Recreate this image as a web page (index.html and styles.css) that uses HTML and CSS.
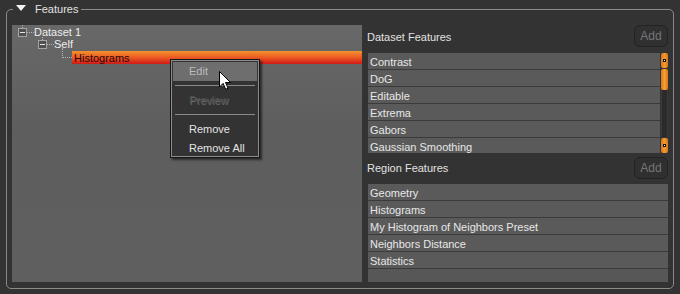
FILE: index.html
```html
<!DOCTYPE html>
<html lang="en">
<head>
<meta charset="UTF-8" />
<title>Features</title>
<link rel="stylesheet" href="styles.css">
</head>
<body>
  <div class="group">
    <div class="group-title">
      <svg class="caret" viewBox="0 0 10 6" aria-hidden="true"><path d="M0 0h10L5 6z" fill="#f2f2f2"/></svg>
      <span>Features</span>
    </div>

    <div class="content">
      <!-- Tree of features per dataset -->
      <div class="tree">
        <div class="node lvl0">
          <span class="toggle"></span><span class="dots"></span><span class="label">Dataset 1</span>
        </div>
        <div class="node lvl1">
          <span class="toggle"></span><span class="dots"></span><span class="label">Self</span>
        </div>
        <div class="node lvl2">
          <span class="elbow"></span><span class="label selected">Histograms</span>
        </div>
      </div>

      <div class="side">
        <div class="side-head">
          <span class="side-label">Dataset Features</span>
          <button class="add" disabled>Add</button>
        </div>
        <div class="list-wrap">
          <ul class="list">
            <li>Contrast</li>
            <li>DoG</li>
            <li>Editable</li>
            <li>Extrema</li>
            <li>Gabors</li>
            <li>Gaussian Smoothing</li>
          </ul>
          <div class="scrollbar">
            <span class="sb-btn"><i></i></span>
            <span class="sb-track"><span class="sb-thumb"></span></span>
            <span class="sb-btn"><i></i></span>
          </div>
        </div>

        <div class="side-head region-head">
          <span class="side-label">Region Features</span>
          <button class="add" disabled>Add</button>
        </div>
        <ul class="list region-list">
          <li>Geometry</li>
          <li>Histograms</li>
          <li>My Histogram of Neighbors Preset</li>
          <li>Neighbors Distance</li>
          <li>Statistics</li>
        </ul>
      </div>
    </div>
  </div>

  <!-- Context menu over the tree -->
  <div class="menu">
    <div class="menu-item active">Edit</div>
    <div class="menu-sep"></div>
    <div class="menu-item disabled">Preview</div>
    <div class="menu-sep"></div>
    <div class="menu-item">Remove</div>
    <div class="menu-item">Remove All</div>
  </div>

  <svg class="cursor" viewBox="0 0 12 19" aria-hidden="true">
    <path d="M0.5 0.5v15.5l3.6-3.6 2.6 5.9 2.4-1-2.6-5.8h5z" fill="#fff" stroke="#000" stroke-width="1"/>
  </svg>
</body>
</html>
```

FILE: styles.css
```css
* {
  margin: 0;
  padding: 0;
  box-sizing: border-box;
}

body {
  width: 680px;
  height: 294px;
  overflow: hidden;
  background: #333;
  font-family: "Liberation Sans", Arial, sans-serif;
  font-size: 11px;
  color: #e4e4e4;
  position: relative;
}

/* Group box with title on the frame */
.group {
  position: relative;
  margin: 9px 0 0 6px;
  width: 668px;
  height: 280px;
  border: 1px solid #8a8a8a;
  border-radius: 5px;
  padding: 15px 5px 6px 5px;
}

.group-title {
  position: absolute;
  top: -8px;
  left: 6px;
  height: 14px;
  padding: 0 3px;
  background: #333;
  display: flex;
  align-items: center;
  gap: 9px;
  color: #e2e2e2;
}

.caret {
  width: 10px;
  height: 6px;
  margin-top: -3px;
}

.content {
  display: flex;
  gap: 6px;
  height: 257px;
}

/* Tree panel */
.tree {
  width: 350px;
  height: 257px;
  padding-top: 1px;
  background: linear-gradient(#686868, #5e5e5e 40%, #5f5f5f);
}

.node {
  display: flex;
  align-items: center;
  height: 12px;
}

.lvl0 { padding-left: 6px; }
.lvl1 { padding-left: 26px; }
.lvl2 {
  padding-left: 50px;
  height: 13px;
  margin-top: 1px;
  align-items: flex-start;
}

.toggle {
  position: relative;
  width: 9px;
  height: 9px;
  border: 1px solid #a4a4a4;
  background: #505050;
  flex-shrink: 0;
}

.toggle::after {
  content: "";
  position: absolute;
  left: 1px;
  top: 3px;
  width: 5px;
  height: 1px;
  background: #e6e6e6;
}

.toggle::before {
  content: "";
  position: absolute;
  left: 3px;
  top: -4px;
  height: 3px;
  border-left: 1px dotted #b4b4b4;
}

.dots {
  width: 7px;
  border-top: 1px dotted #b4b4b4;
}

.label {
  line-height: 13px;
  color: #eee;
}

.elbow {
  width: 10px;
  height: 10px;
  margin-top: -3px;
  border-left: 1px dotted #b4b4b4;
  border-bottom: 1px dotted #b4b4b4;
}

.label.selected {
  flex: 1;
  height: 13px;
  line-height: 14px;
  padding-left: 2px;
  color: #2a0404;
  background: linear-gradient(#f4922e, #ea5a22 50%, #cf1a18);
}

/* Right column */
.side {
  width: 300px;
  display: flex;
  flex-direction: column;
}

.side-head {
  height: 22px;
  display: flex;
  align-items: center;
  justify-content: space-between;
  margin-bottom: 6px;
}

.side-label {
  margin-left: -1px;
  padding-top: 1px;
  color: #e2e2e2;
}

.add {
  width: 34px;
  height: 22px;
  border: 1px solid #232323;
  border-radius: 6px;
  background: #303030;
  color: #767676;
  font-family: "Liberation Sans", Arial, sans-serif;
  font-size: 12px;
}

.region-head {
  height: 21px;
  margin-top: 4px;
}

.list-wrap {
  display: flex;
  gap: 1px;
  height: 100px;
}

.list {
  list-style: none;
  flex: 1;
  height: 100%;
  overflow: hidden;
  background: #575757;
}

.list li {
  height: 17px;
  line-height: 16px;
  padding: 1px 0 0 2px;
  background: #5a5a5a;
  border-bottom: 1px solid #3b3b3b;
  color: #e8e8e8;
  white-space: nowrap;
}

.region-list {
  flex: none;
  height: 98px;
}

/* Orange scrollbar */
.scrollbar {
  width: 7px;
  display: flex;
  flex-direction: column;
}

.sb-btn {
  height: 15px;
  border-radius: 2px;
  background: linear-gradient(90deg, #d8761a, #f59a2e 50%, #d8761a);
  display: flex;
  align-items: center;
  justify-content: center;
}

.sb-btn i {
  width: 3px;
  height: 3px;
  background: #111;
  position: relative;
}

.sb-btn i::after {
  content: "";
  position: absolute;
  left: 1px;
  top: 1px;
  width: 1px;
  height: 1px;
  background: #fff;
}

.sb-track {
  flex: 1;
  background: #2b2b2b;
  border-left: 1px solid #3a3a3a;
  border-right: 1px solid #3a3a3a;
  margin: 1px 0;
}

.sb-thumb {
  display: block;
  height: 21px;
  margin: 0 -1px;
  border-radius: 2px;
  background: linear-gradient(90deg, #d8761a, #f7a032 50%, #d8761a);
}

/* Context menu */
.menu {
  position: absolute;
  left: 170px;
  top: 59px;
  width: 90px;
  height: 99px;
  padding: 2px;
  background: #333;
  border: 1px solid #161616;
  box-shadow: inset 0 0 0 1px #8c8c8c, 2px 2px 2px rgba(0, 0, 0, 0.55);
}

.menu-item {
  height: 19px;
  line-height: 19px;
  padding-left: 16px;
  color: #e4e4e4;
}

.menu-item.active {
  background: #6e6e6e;
  color: #bdbdbd;
}

.menu-item.disabled {
  color: #4e4e4e;
  text-shadow: 1px 1px 0 #6a6a6a;
}

.menu-sep {
  height: 1px;
  margin: 4px 2px 5px;
  background: #8a8a8a;
}

.cursor {
  position: absolute;
  left: 219px;
  top: 71px;
  width: 12px;
  height: 19px;
}
```
